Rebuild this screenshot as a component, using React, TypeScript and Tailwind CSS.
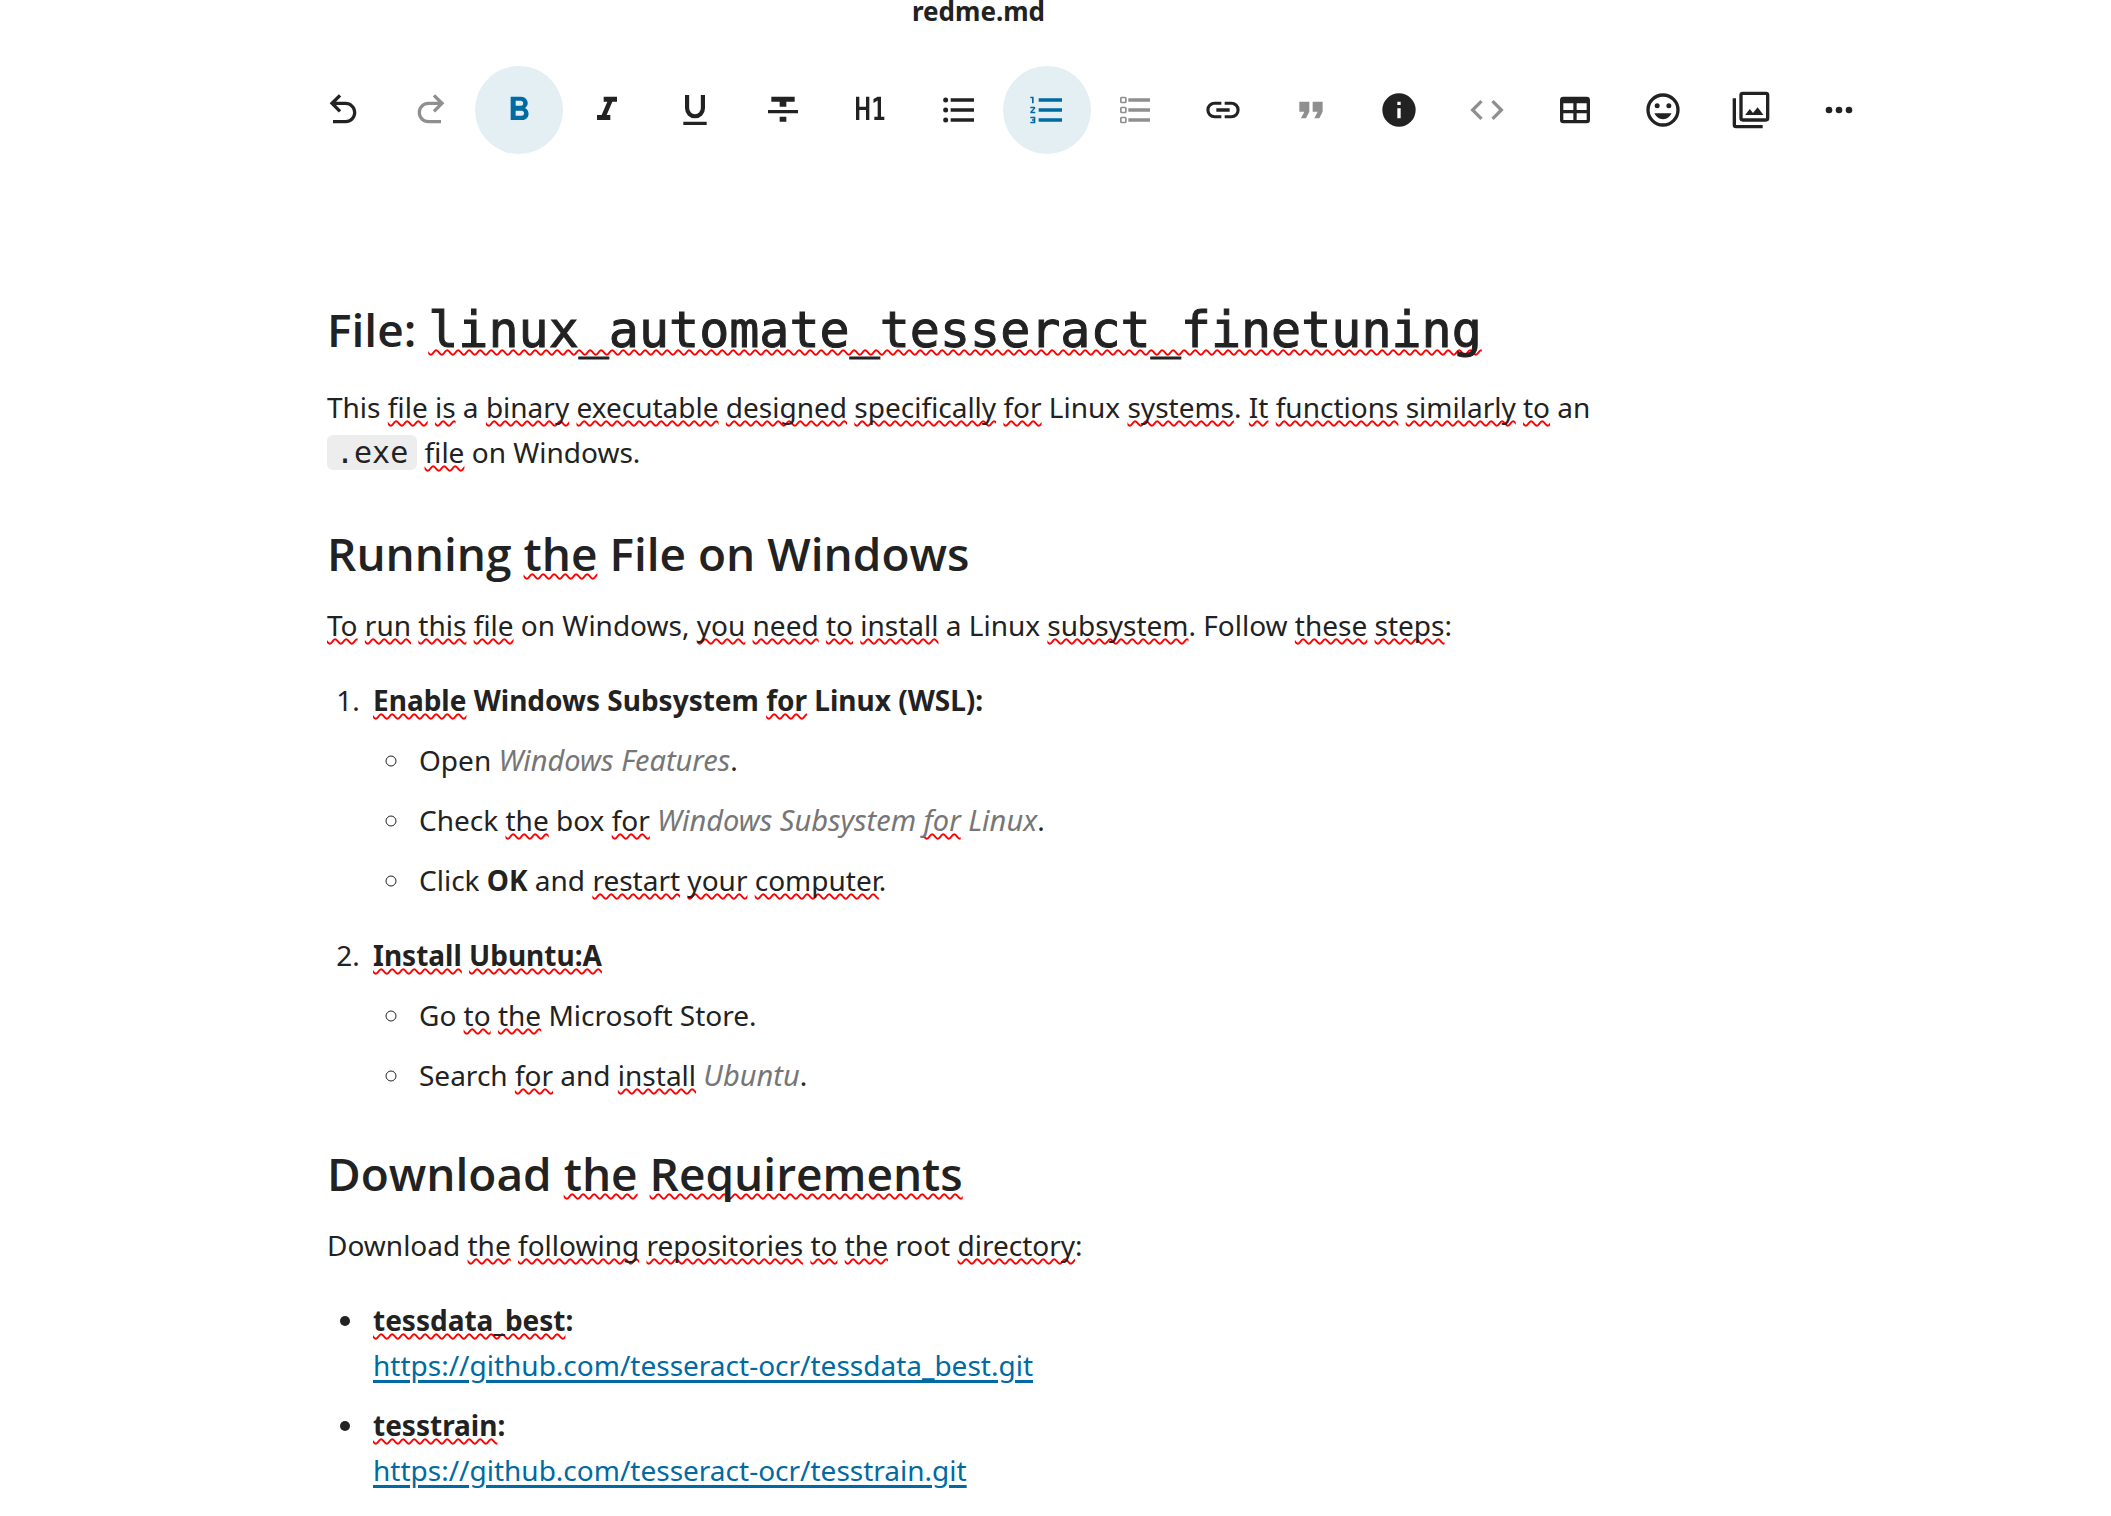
import type { ReactNode } from "react";

type Tool = {
  label: string;
  path: string;
  active?: boolean;
  disabled?: boolean;
};

const tools: Tool[] = [
  {
    label: "Undo",
    path: "M20 13.5C20 17.09 17.09 20 13.5 20H6V18H13.5C16 18 18 16 18 13.5S16 9 13.5 9H7.83L10.91 12.09L9.5 13.5L4 8L9.5 2.5L10.92 3.91L7.83 7H13.5C17.09 7 20 9.91 20 13.5Z",
  },
  {
    label: "Redo",
    disabled: true,
    path: "M10.5 18H18V20H10.5C6.91 20 4 17.09 4 13.5S6.91 7 10.5 7H16.17L13.08 3.91L14.5 2.5L20 8L14.5 13.5L13.09 12.09L16.17 9H10.5C8 9 6 11 6 13.5S8 18 10.5 18Z",
  },
  {
    label: "Bold",
    active: true,
    path: "M13.5,15.5H10V12.5H13.5A1.5,1.5 0 0,1 15,14A1.5,1.5 0 0,1 13.5,15.5M10,6.5H13A1.5,1.5 0 0,1 14.5,8A1.5,1.5 0 0,1 13,9.5H10M15.6,10.79C16.57,10.11 17.25,9 17.25,8C17.25,5.74 15.5,4 13.25,4H7V18H14.04C16.14,18 17.75,16.3 17.75,14.21C17.75,12.69 16.89,11.39 15.6,10.79Z",
  },
  {
    label: "Italic",
    path: "M10,4V7H12.21L8.79,15H6V18H14V15H11.79L15.21,7H18V4H10Z",
  },
  {
    label: "Underline",
    path: "M5,21H19V19H5V21M12,17A6,6 0 0,0 18,11V3H15.5V11A3.5,3.5 0 0,1 12,14.5A3.5,3.5 0 0,1 8.5,11V3H6V11A6,6 0 0,0 12,17Z",
  },
  {
    label: "Strikethrough",
    path: "M3,14H21V12H3M5,4V7H10V10H14V7H19V4M10,19H14V16H10V19Z",
  },
  {
    label: "Heading 1",
    path: "M3,4H5V10H9V4H11V18H9V12H5V18H3V4M14,18V16H16V6.31L13.5,7.75V5.44L16,4H18V16H20V18H14Z",
  },
  {
    label: "Unordered list",
    path: "M7,5H21V7H7V5M7,13V11H21V13H7M4,4.5A1.5,1.5 0 0,1 5.5,6A1.5,1.5 0 0,1 4,7.5A1.5,1.5 0 0,1 2.5,6A1.5,1.5 0 0,1 4,4.5M4,10.5A1.5,1.5 0 0,1 5.5,12A1.5,1.5 0 0,1 4,13.5A1.5,1.5 0 0,1 2.5,12A1.5,1.5 0 0,1 4,10.5M7,19V17H21V19H7M4,16.5A1.5,1.5 0 0,1 5.5,18A1.5,1.5 0 0,1 4,19.5A1.5,1.5 0 0,1 2.5,18A1.5,1.5 0 0,1 4,16.5Z",
  },
  {
    label: "Ordered list",
    active: true,
    path: "M7,13V11H21V13H7M7,19V17H21V19H7M7,7V5H21V7H7M3,8V5H2V4H4V8H3M2,17V16H5V20H2V19H4V18.5H3V17.5H4V17H2M4.25,10A0.75,0.75 0 0,1 5,10.75C5,10.95 4.92,11.14 4.79,11.27L3.12,13H5V14H2V13.08L4,11H2V10H4.25Z",
  },
  {
    label: "To-do list",
    disabled: true,
    path: "M21,19V17H8V19H21M21,13V11H8V13H21M8,7H21V5H8V7M4,5V7H6V5H4M3,5A1,1 0 0,1 4,4H6A1,1 0 0,1 7,5V7A1,1 0 0,1 6,8H4A1,1 0 0,1 3,7V5M4,11V13H6V11H4M3,11A1,1 0 0,1 4,10H6A1,1 0 0,1 7,11V13A1,1 0 0,1 6,14H4A1,1 0 0,1 3,13V11M4,17V19H6V17H4M3,17A1,1 0 0,1 4,16H6A1,1 0 0,1 7,17V19A1,1 0 0,1 6,20H4A1,1 0 0,1 3,19V17Z",
  },
  {
    label: "Insert link",
    path: "M3.9,12C3.9,10.29 5.29,8.9 7,8.9H11V7H7A5,5 0 0,0 2,12A5,5 0 0,0 7,17H11V15.1H7C5.29,15.1 3.9,13.71 3.9,12M8,13H16V11H8V13M17,7H13V8.9H17C18.71,8.9 20.1,10.29 20.1,12C20.1,13.71 18.71,15.1 17,15.1H13V17H17A5,5 0 0,0 22,12A5,5 0 0,0 17,7Z",
  },
  {
    label: "Blockquote",
    disabled: true,
    path: "M14,17H17L19,13V7H13V13H16M6,17H9L11,13V7H5V13H8L6,17Z",
  },
  {
    label: "Callouts",
    path: "M13,9H11V7H13M13,17H11V11H13M12,2A10,10 0 0,0 2,12A10,10 0 0,0 12,22A10,10 0 0,0 22,12A10,10 0 0,0 12,2Z",
  },
  {
    label: "Code block",
    disabled: true,
    path: "M14.6,16.6L19.2,12L14.6,7.4L16,6L22,12L16,18L14.6,16.6M9.4,16.6L4.8,12L9.4,7.4L8,6L2,12L8,18L9.4,16.6Z",
  },
  {
    label: "Table",
    path: "M5,4H19A2,2 0 0,1 21,6V18A2,2 0 0,1 19,20H5A2,2 0 0,1 3,18V6A2,2 0 0,1 5,4M5,8V12H11V8H5M13,8V12H19V8H13M5,14V18H11V14H5M13,14V18H19V14H13Z",
  },
  {
    label: "Insert emoji",
    path: "M12,17.5C14.33,17.5 16.3,16.04 17.11,14H6.89C7.69,16.04 9.67,17.5 12,17.5M8.5,11A1.5,1.5 0 0,0 10,9.5A1.5,1.5 0 0,0 8.5,8A1.5,1.5 0 0,0 7,9.5A1.5,1.5 0 0,0 8.5,11M15.5,11A1.5,1.5 0 0,0 17,9.5A1.5,1.5 0 0,0 15.5,8A1.5,1.5 0 0,0 14,9.5A1.5,1.5 0 0,0 15.5,11M12,20A8,8 0 0,1 4,12A8,8 0 0,1 12,4A8,8 0 0,1 20,12A8,8 0 0,1 12,20M12,2C6.47,2 2,6.5 2,12A10,10 0 0,0 12,22A10,10 0 0,0 22,12A10,10 0 0,0 12,2Z",
  },
  {
    label: "Insert attachment",
    path: "M21,17H7V3H21M21,1H7A2,2 0 0,0 5,3V17A2,2 0 0,0 7,19H21A2,2 0 0,0 23,17V3A2,2 0 0,0 21,1M3,5H1V21A2,2 0 0,0 3,23H19V21H3M15.96,10.29L13.21,13.83L11.25,11.47L8.5,15H19.5L15.96,10.29Z",
  },
  {
    label: "Remaining actions",
    path: "M16,12A2,2 0 0,1 18,10A2,2 0 0,1 20,12A2,2 0 0,1 18,14A2,2 0 0,1 16,12M10,12A2,2 0 0,1 12,10A2,2 0 0,1 14,12A2,2 0 0,1 12,14A2,2 0 0,1 10,12M4,12A2,2 0 0,1 6,10A2,2 0 0,1 8,12A2,2 0 0,1 6,14A2,2 0 0,1 4,12Z",
  },
];

function ToolButton({ tool }: { tool: Tool }) {
  const tone = tool.active ? "bg-[#e4eff4] text-[#006aa3]" : "text-[#222222]";
  return (
    <button
      type="button"
      aria-label={tool.label}
      aria-pressed={tool.active}
      disabled={tool.disabled}
      className={`flex size-[88px] shrink-0 items-center justify-center rounded-full disabled:opacity-50 ${tone}`}
    >
      <svg viewBox="0 0 24 24" className="size-10 fill-current" aria-hidden="true">
        <path d={tool.path} />
      </svg>
    </button>
  );
}

/* A word flagged by the spell checker. */
function S({ children }: { children: ReactNode }) {
  return (
    <span className="underline decoration-[#ff0000] decoration-wavy decoration-2 underline-offset-2 [text-decoration-skip-ink:none]">
      {children}
    </span>
  );
}

function Em({ children }: { children: ReactNode }) {
  return <em className="text-[29px] leading-none text-[#767676]">{children}</em>;
}

function Heading({ children }: { children: ReactNode }) {
  return (
    <h2 className="mt-[45px] font-['Open_Sans',sans-serif] text-[46px] leading-[60px] font-semibold">{children}</h2>
  );
}

function RepoLink({ href }: { href: string }) {
  return (
    <a href={href} className="text-[#006aa3] underline decoration-[3px] underline-offset-4">
      {href}
    </a>
  );
}

export default function App() {
  return (
    <div className="min-h-screen bg-white font-['Noto_Sans',sans-serif] text-[28px] leading-[45px] text-[#222222]">
      <header className="-mt-[11px] pr-[154px] text-center text-[26px] font-bold">redme.md</header>

      <div role="toolbar" aria-label="Formatting" className="mt-8 flex pl-[299px]">
        {tools.map((tool) => (
          <ToolButton key={tool.label} tool={tool} />
        ))}
      </div>

      <main className="ml-[327px] max-w-[1340px] pt-[145px]">
        <h1 className="font-['Open_Sans',sans-serif] text-[46px] leading-[60px] font-semibold">
          File:{" "}
          <code className="font-['DejaVu_Sans_Mono',monospace] text-[50px] font-normal [-webkit-text-stroke:1px]">
            <S>linux_automate_tesseract_finetuning</S>
          </code>
        </h1>
        <p className="mt-[25px] pb-[3px]">
          This <S>file</S> <S>is</S> a <S>binary</S> <S>executable</S> <S>designed</S> <S>specifically</S> <S>for</S>{" "}
          Linux <S>systems</S>. <S>It</S> <S>functions</S> <S>similarly</S> <S>to</S> an{" "}
          <code className="rounded-md bg-[#ededed] px-[9px] font-['DejaVu_Sans_Mono',monospace] text-[30px]">
            .exe
          </code>{" "}
          <S>file</S> on Windows.
        </p>

        <Heading>
          Running <S>the</S> File on Windows
        </Heading>
        <p className="mt-5">
          <S>To</S> <S>run</S> <S>this</S> <S>file</S> on Windows, <S>you</S> <S>need</S> <S>to</S> <S>install</S> a
          Linux <S>subsystem</S>. Follow <S>these</S> <S>steps</S>:
        </p>
        <ol className="mt-[30px] list-decimal space-y-[30px] pl-10 [&_li]:pl-1.5">
          <li>
            <strong className="font-bold">
              <S>Enable</S> Windows Subsystem <S>for</S> Linux (WSL):
            </strong>
            <ul className="mt-[15px] list-[circle] space-y-[15px] pl-10">
              <li>
                Open <Em>Windows Features</Em>.
              </li>
              <li>
                Check <S>the</S> box <S>for</S>{" "}
                <Em>
                  Windows Subsystem <S>for</S> Linux
                </Em>
                .
              </li>
              <li>
                Click <strong className="font-bold">OK</strong> and <S>restart</S> <S>your</S> <S>computer</S>.
              </li>
            </ul>
          </li>
          <li>
            <strong className="font-bold">
              <S>Install</S> <S>Ubuntu:A</S>
            </strong>
            <ul className="mt-[15px] list-[circle] space-y-[15px] pl-10">
              <li>
                Go <S>to</S> <S>the</S> Microsoft Store.
              </li>
              <li>
                Search <S>for</S> and <S>install</S> <Em>Ubuntu</Em>.
              </li>
            </ul>
          </li>
        </ol>

        <Heading>
          Download <S>the</S> <S>Requirements</S>
        </Heading>
        <p className="mt-5">
          Download <S>the</S> <S>following</S> <S>repositories</S> <S>to</S> <S>the</S> root <S>directory</S>:
        </p>
        <ul className="mt-[30px] list-disc space-y-[15px] pl-10 [&_li]:pl-1.5">
          <li>
            <strong className="font-bold">
              <S>tessdata_best</S>:
            </strong>
            <br />
            <RepoLink href="https://github.com/tesseract-ocr/tessdata_best.git" />
          </li>
          <li>
            <strong className="font-bold">
              <S>tesstrain</S>:
            </strong>
            <br />
            <RepoLink href="https://github.com/tesseract-ocr/tesstrain.git" />
          </li>
        </ul>
      </main>
    </div>
  );
}
